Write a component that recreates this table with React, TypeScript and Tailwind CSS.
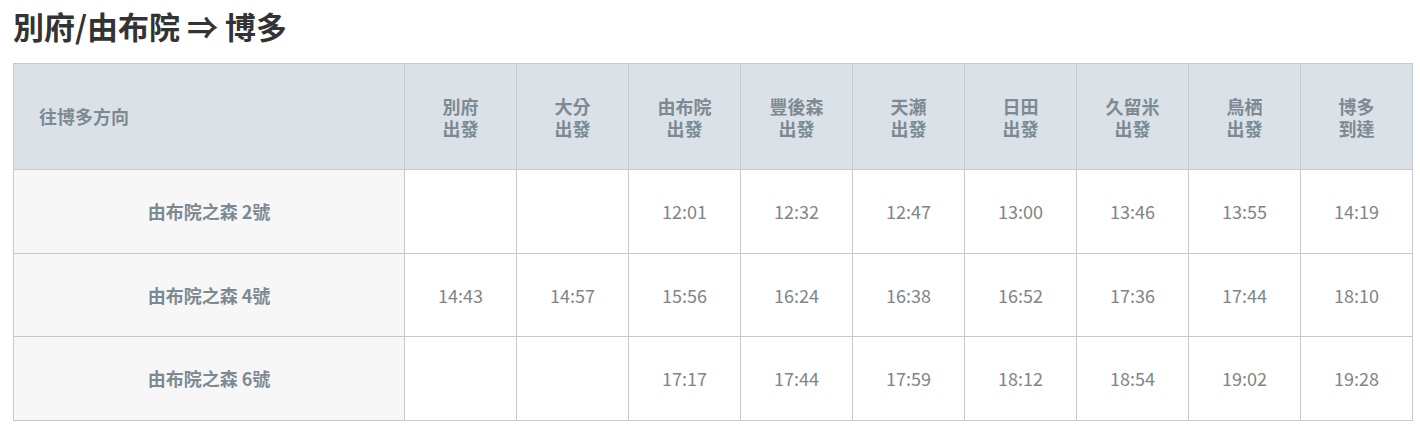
const stations = [
  ["別府", "出發"],
  ["大分", "出發"],
  ["由布院", "出發"],
  ["豐後森", "出發"],
  ["天瀬", "出發"],
  ["日田", "出發"],
  ["久留米", "出發"],
  ["鳥栖", "出發"],
  ["博多", "到達"],
];

const trains = [
  { name: "由布院之森 2號", times: ["", "", "12:01", "12:32", "12:47", "13:00", "13:46", "13:55", "14:19"] },
  { name: "由布院之森 4號", times: ["14:43", "14:57", "15:56", "16:24", "16:38", "16:52", "17:36", "17:44", "18:10"] },
  { name: "由布院之森 6號", times: ["", "", "17:17", "17:44", "17:59", "18:12", "18:54", "19:02", "19:28"] },
];

export default function App() {
  return (
    <div className="bg-white px-[13px] pt-[3px] font-['Noto_Sans_CJK_TC','Noto_Sans',sans-serif]">
      <h2 className="text-[31px] font-bold leading-[45px] text-[#333333]">別府/由布院 ⇒ 博多</h2>
      <table className="mt-[15px] w-[1399px] table-fixed border-collapse border border-[#c6cacd]">
        <colgroup>
          <col className="w-[391px]" />
          {stations.map((_, i) => (
            <col key={i} className="w-[112px]" />
          ))}
        </colgroup>
        <thead>
          <tr className="h-[106px] bg-[#dae2e8]">
            <th className="border border-[#c6cacd] pl-[25px] text-left text-[18px] font-bold text-[#7d8a93]">往博多方向</th>
            {stations.map(([a, b]) => (
              <th key={a} className="border border-[#c6cacd] text-center text-[18px] font-bold leading-[22px] text-[#7d8a93]">
                {a}
                <br />
                {b}
              </th>
            ))}
          </tr>
        </thead>
        <tbody>
          {trains.map((t, r) => (
            <tr key={t.name} className={r === 1 ? "h-[83px]" : "h-[84px]"}>
              <td className="border border-[#c6cacd] bg-[#f7f7f7] text-center text-[18px] font-bold text-[#7d8a93]">{t.name}</td>
              {t.times.map((v, i) => (
                <td key={i} className="border border-[#c6cacd] bg-white text-center text-[18px] text-[#80858a]">
                  {v}
                </td>
              ))}
            </tr>
          ))}
        </tbody>
      </table>
    </div>
  );
}
